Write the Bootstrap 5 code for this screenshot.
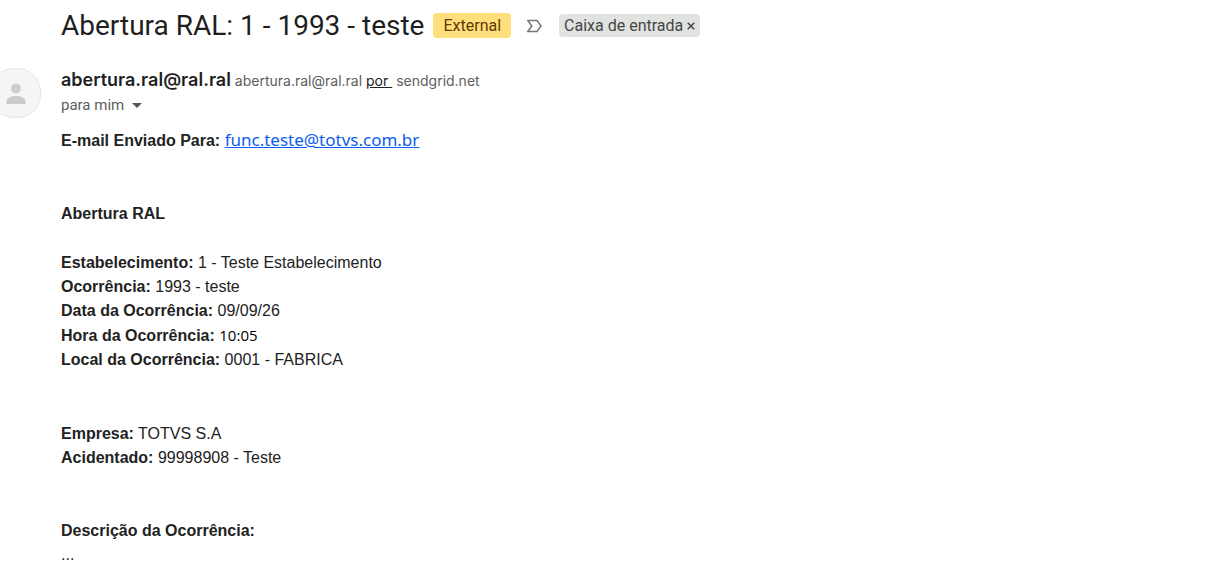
<!DOCTYPE html>
<html lang="pt-BR">
<head>
<meta charset="utf-8">
<meta name="viewport" content="width=device-width, initial-scale=1">
<title>Abertura RAL</title>
<link rel="stylesheet" href="https://cdn.jsdelivr.net/npm/bootstrap@5.3.0/dist/css/bootstrap.min.css">
<style>
  body { font-family: "Liberation Sans", Arial, sans-serif; font-size: 16px; line-height: 24px; color: #222; background: #fff; }
  .mail-head { padding: 7px 16px 0 61px; min-height: 44px; }
  .subject { font-family: Roboto, sans-serif; font-size: 28px; line-height: 36px; font-weight: 400; color: #1f1f1f; margin-right: 9px; }
  .tag { font-family: Roboto, sans-serif; font-size: 16px; line-height: 24px; border-radius: 4px; }
  .tag-external { background: #ffdf7c; color: #5f3b00; padding: 0 10px; line-height: 25px; }
  .tag-inbox { background: #e1e3e1; color: #444746; line-height: 23px; padding: 0 5px; }
  .plain { border: 0; background: none; padding: 0; line-height: 1; color: inherit; }
  .sender-row { padding-top: 24px; }
  .avatar { width: 41px; height: 50px; margin-right: 20px; }
  .sender { font-family: Roboto, sans-serif; color: #5e5e5e; font-size: 15px; line-height: 24px; }
  .sender-line { font-family: Inter, sans-serif; font-size: 14px; }
  .sender-name { font-size: 18px; font-weight: 600; color: #1f1f1f; }
  .sender-via { color: #222; }
  .message { padding: 11px 16px 0 61px; }
  .message p { margin-bottom: 49px; }
  .message .incident { margin-bottom: 50px; }
  .message h2 { font-size: 16px; line-height: 24px; font-weight: 700; margin-bottom: 25px; }
  .mail-link { font-family: "Noto Sans", sans-serif; font-size: 17px; line-height: 20px; color: #0b5cf0; }
  .hour { font-family: "Open Sans", sans-serif; font-size: 15px; color: #000; }
</style>
</head>
<body>
<header class="mail-head d-flex align-items-center flex-wrap">
  <h1 class="subject mb-0">Abertura RAL: 1 - 1993 - teste</h1>
  <span class="tag tag-external">External</span>
  <button class="plain d-flex ms-3 me-3" type="button" aria-label="Marcar como importante">
    <svg width="16" height="14" viewBox="0 0 16 14" fill="none" stroke="#777" stroke-width="1.5"><path d="M.8 1.500H10L14 7L10 12.500H.8L4.800 7Z"/></svg>
  </button>
  <span class="tag tag-inbox d-inline-flex align-items-center">Caixa de entrada
    <button class="plain ms-1" type="button" aria-label="Remover marcador"><svg class="d-block" width="8" height="8" viewBox="0 0 8 8" stroke="#444746" stroke-width="1.500"><path d="M.7.7l6.600 6.600M7.300.7L.7 7.300"/></svg></button>
  </span>
</header>
<main>
  <section class="sender-row d-flex">
    <svg class="avatar flex-shrink-0" viewBox="0 0 41 50" aria-hidden="true"><rect x="-9.500" y=".5" width="50" height="49" rx="23" fill="#f5f5f5" stroke="#e4e4e4"/><circle cx="16" cy="20.500" r="5" fill="#ccc"/><path d="M6.500 36v-3c0-3 5-5 9.500-5s9.500 2 9.500 5v3z" fill="#ccc"/></svg>
    <div class="sender">
      <div class="sender-line"><span class="sender-name">abertura.ral@ral.ral</span> <span>abertura.ral@ral.ral</span> <a class="sender-via" href="#">por&nbsp;</a> <span>sendgrid.net</span></div>
      <div class="d-flex align-items-center">para mim <button class="plain ms-2" type="button" aria-label="Mostrar detalhes"><svg class="d-block" width="10" height="5" viewBox="0 0 10 5"><path d="M0 0h10L5 5z" fill="#555"/></svg></button></div>
    </div>
  </section>
  <article class="message">
    <p><strong>E-mail Enviado Para:</strong> <a class="mail-link" href="mailto:func.teste@totvs.com.br">func.teste@totvs.com.br</a></p>
    <h2>Abertura RAL</h2>
    <p class="incident"><strong>Estabelecimento:</strong> 1 - Teste Estabelecimento<br>
    <strong>Ocorrência:</strong> 1993 - teste<br>
    <strong>Data da Ocorrência:</strong> 09/09/26<br>
    <strong>Hora da Ocorrência:</strong> <span class="hour">10:05</span><br>
    <strong>Local da Ocorrência:</strong> 0001 - FABRICA</p>
    <p><strong>Empresa:</strong> TOTVS S.A<br>
    <strong>Acidentado:</strong> 99998908 - Teste</p>
    <p class="mb-0"><strong>Descrição da Ocorrência:</strong><br>...</p>
  </article>
</main>
<script src="https://cdn.jsdelivr.net/npm/bootstrap@5.3.0/dist/js/bootstrap.bundle.min.js"></script>
</body>
</html>
